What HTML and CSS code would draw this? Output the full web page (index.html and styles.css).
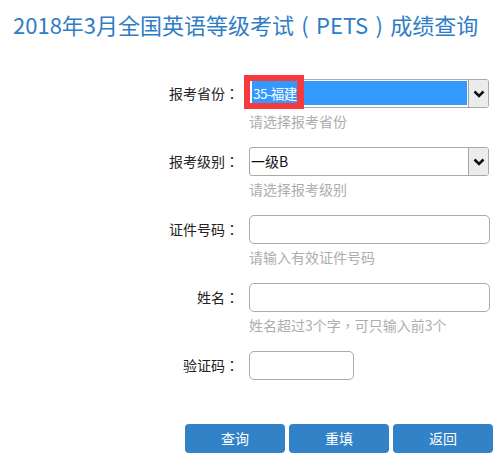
FILE: index.html
```html
<!DOCTYPE html>
<html lang="zh-CN">
<head>
<meta charset="utf-8">
<title>2018年3月全国英语等级考试（PETS）成绩查询</title>
<link rel="stylesheet" href="styles.css">
</head>
<body>
<div class="page">
  <h1 class="title">2018年3月全国英语等级考试<span class="paren">(</span>PETS<span class="paren">)</span>成绩查询</h1>
  <form class="form">
    <div class="row">
      <label class="label">报考省份<span class="punct" lang="zh-TW">：</span></label>
      <div class="field">
        <div class="select select-focus">
          <span class="select-value">35-福建</span>
          <span class="select-arrow"><svg width="12" height="8" viewBox="0 0 12 8"><polyline points="1.5,1.5 6,6 10.5,1.5" fill="none" stroke="#111" stroke-width="2.5"/></svg></span>
          <span class="mark"></span>
        </div>
        <div class="hint">请选择报考省份</div>
      </div>
    </div>
    <div class="row">
      <label class="label">报考级别<span class="punct" lang="zh-TW">：</span></label>
      <div class="field">
        <div class="select">
          <span class="select-value">一级B</span>
          <span class="select-arrow"><svg width="12" height="8" viewBox="0 0 12 8"><polyline points="1.5,1.5 6,6 10.5,1.5" fill="none" stroke="#111" stroke-width="2.5"/></svg></span>
        </div>
        <div class="hint">请选择报考级别</div>
      </div>
    </div>
    <div class="row">
      <label class="label">证件号码<span class="punct" lang="zh-TW">：</span></label>
      <div class="field">
        <input class="input" type="text">
        <div class="hint">请输入有效证件号码</div>
      </div>
    </div>
    <div class="row">
      <label class="label">姓名<span class="punct" lang="zh-TW">：</span></label>
      <div class="field">
        <input class="input" type="text">
        <div class="hint">姓名超过3个字<span class="punct" lang="zh-TW">，</span>可只输入前3个</div>
      </div>
    </div>
    <div class="row">
      <label class="label">验证码<span class="punct" lang="zh-TW">：</span></label>
      <div class="field">
        <input class="input input-short" type="text">
      </div>
    </div>
    <div class="actions">
      <button type="button" class="btn">查询</button>
      <button type="button" class="btn">重填</button>
      <button type="button" class="btn">返回</button>
    </div>
  </form>
</div>
</body>
</html>
```

FILE: styles.css
```css
html, body {
  margin: 0;
  padding: 0;
  background: #fff;
}
body {
  font-family: "Microsoft YaHei", "Noto Sans CJK SC", "Noto Sans", sans-serif;
  color: #222;
}
.page {
  width: 496px;
  padding: 9px 0 0 0;
  box-sizing: border-box;
}
.title {
  margin: 0 0 0 13px;
  font-size: 22px;
  line-height: 30px;
  font-weight: normal;
  color: #2e7dc6;
  white-space: nowrap;
}
.paren {
  padding: 0 0.33em;
}
.punct {
  font-family: "Noto Sans CJK TC", "Noto Sans CJK SC", sans-serif;
}
.form {
  margin-top: 40px;
  display: flex;
  flex-direction: column;
  gap: 16px;
}
.row {
  display: grid;
  grid-template-columns: 239px 241px;
  column-gap: 10px;
  align-items: start;
}
.label {
  text-align: right;
  font-size: 14px;
  line-height: 29px;
  height: 29px;
  color: #222;
  white-space: nowrap;
}
.field {
  display: flex;
  flex-direction: column;
  align-items: flex-start;
}
.select {
  position: relative;
  width: 240px;
  height: 29px;
  box-sizing: border-box;
  border: 1px solid #a9a9a9;
  border-radius: 3px;
  background: #fff;
  display: flex;
  align-items: stretch;
}
.select-value {
  flex: 1;
  font-size: 14px;
  line-height: 27px;
  padding-left: 1px;
  color: #111;
  white-space: nowrap;
}
.select-focus .select-value {
  margin: 1px 0 2px 2px;
  padding-left: 1px;
  line-height: 24px;
  font-size: 13.5px;
  letter-spacing: -0.6px;
  background: #3399ff;
  color: #fff;
}
.select-arrow {
  width: 19px;
  border-left: 1px solid #a5a5a5;
  background: #ececec;
  border-radius: 0 2px 2px 0;
  display: flex;
  align-items: center;
  justify-content: center;
}
.select-focus .select-arrow {
  margin-left: 1px;
}
.mark {
  position: absolute;
  left: -6px;
  top: -5px;
  width: 60px;
  height: 34px;
  box-sizing: border-box;
  border: 6px solid #f53a3e;
  border-right-width: 7px;
}
.hint {
  margin-top: 3px;
  font-size: 14px;
  line-height: 20px;
  color: #adadad;
  white-space: nowrap;
}
.input {
  display: block;
  width: 241px;
  height: 29px;
  box-sizing: border-box;
  margin: 0;
  border: 1px solid #aaaaaa;
  border-radius: 5px;
  background: #fff;
  font-size: 14px;
  padding: 0 4px;
  outline: none;
}
.input-short {
  width: 105px;
}
.actions {
  margin-top: 28px;
  padding-left: 185px;
  display: flex;
  gap: 4px;
}
.btn {
  width: 100px;
  height: 29px;
  margin: 0;
  padding: 0;
  border: none;
  border-radius: 4px;
  background: #3282c7;
  color: #fff;
  font-family: inherit;
  font-size: 14px;
  line-height: 29px;
}
```
